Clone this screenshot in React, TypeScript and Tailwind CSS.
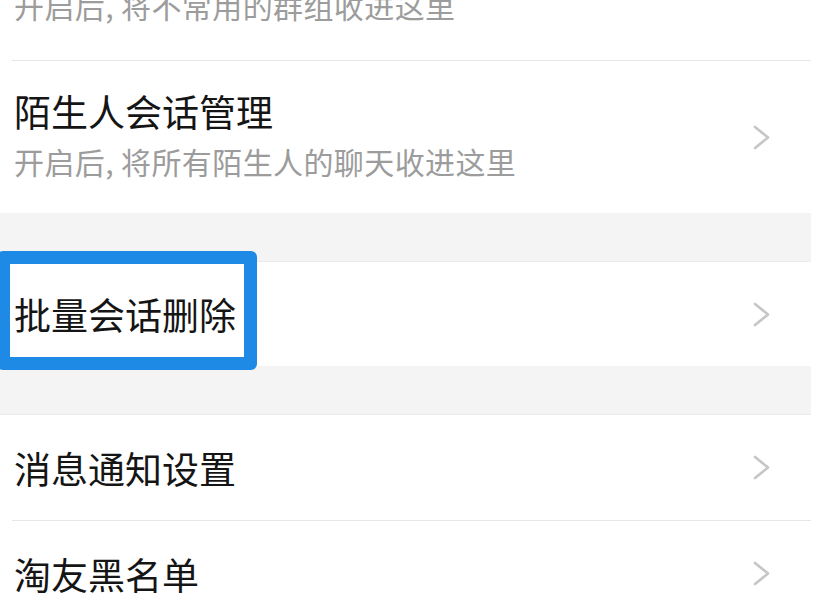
import React from "react";

interface Row {
  title: string;
  subtitle?: string;
}

function Chevron() {
  return (
    <svg width="17" height="25" viewBox="0 0 17 25" className="shrink-0">
      <polyline
        points="2,2 15,12.5 2,23"
        fill="none"
        stroke="#c6c6c6"
        strokeWidth="2.6"
        strokeLinecap="round"
        strokeLinejoin="round"
      />
    </svg>
  );
}

function SettingRow({ row, className }: { row: Row; className: string }) {
  return (
    <div className={`flex items-center justify-between bg-white pl-[14px] pr-[41px] ${className}`}>
      <div className={`flex flex-col ${row.subtitle ? "pb-[6px]" : ""}`}>
        <div className="text-[37px] leading-[44px] text-[#151515]">{row.title}</div>
        {row.subtitle && (
          <div className="mt-[10px] text-[30px] leading-[36px] tracking-[0.4px] text-[#9c9c9c]">
            {row.subtitle}
          </div>
        )}
      </div>
      <Chevron />
    </div>
  );
}

function Divider() {
  return (
    <div className="bg-white pl-[12px]">
      <div className="h-px bg-[#e6e6e6]" />
    </div>
  );
}

function Gap() {
  return <div className="h-[49px] bg-[#f4f4f4] border-b border-[#ebebeb]" />;
}

export default function App() {
  return (
    <div className="relative w-[817px] h-[603px] overflow-hidden bg-white font-['Noto_Sans_CJK_SC','Noto_Sans',sans-serif]">
      <div className="w-[811px]">
        {/* tail of the row above, scrolled mostly out of view */}
        <div className="flex h-[60px] items-end bg-white pl-[14px] pb-[37px]">
          <div className="text-[30px] leading-[36px] tracking-[0.4px] text-[#9c9c9c]">
            开启后, 将不常用的群组收进这里
          </div>
        </div>
        <Divider />
        <SettingRow
          row={{ title: "陌生人会话管理", subtitle: "开启后, 将所有陌生人的聊天收进这里" }}
          className="h-[152px]"
        />
        <Gap />
        <SettingRow row={{ title: "批量会话删除" }} className="h-[104px]" />
        <Gap />
        <SettingRow row={{ title: "消息通知设置" }} className="h-[105px]" />
        <Divider />
        <SettingRow row={{ title: "淘友黑名单" }} className="h-[105px]" />
      </div>

      {/* highlight annotation over the row */}
      <div className="absolute left-[-3px] top-[251px] w-[260px] h-[119px] border-[13px] border-[#1e8ae6] rounded-[6px]" />
    </div>
  );
}
